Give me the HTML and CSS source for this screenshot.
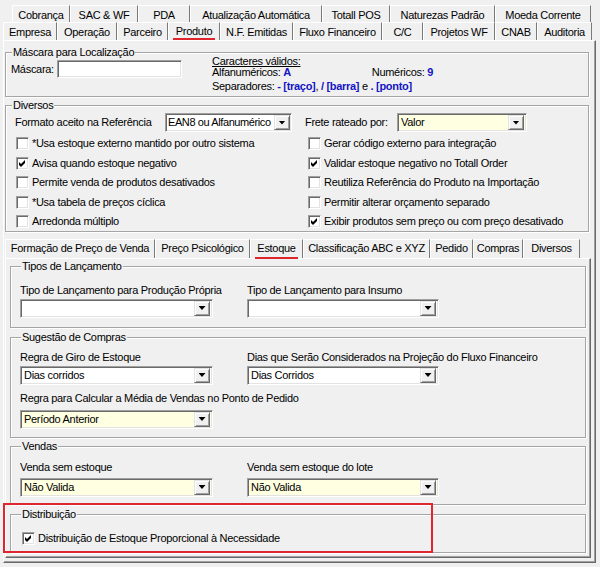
FILE: index.html
```html
<!DOCTYPE html>
<html lang="pt-BR">
<head>
<meta charset="utf-8">
<title>Parâmetros</title>
<link rel="stylesheet" href="styles.css">
</head>
<body>
<div class="window">
  <div class="tabs tabs-r1">
    <span class="tab">Cobrança</span>
    <span class="tab">SAC &amp; WF</span>
    <span class="tab">PDA</span>
    <span class="tab">Atualização Automática</span>
    <span class="tab">Totall POS</span>
    <span class="tab">Naturezas Padrão</span>
    <span class="tab">Moeda Corrente</span>
  </div>
  <div class="tabs tabs-r2">
    <span class="tab">Empresa</span>
    <span class="tab">Operação</span>
    <span class="tab">Parceiro</span>
    <span class="tab sel">Produto</span>
    <span class="tab">N.F. Emitidas</span>
    <span class="tab">Fluxo Financeiro</span>
    <span class="tab">C/C</span>
    <span class="tab">Projetos WF</span>
    <span class="tab">CNAB</span>
    <span class="tab">Auditoria</span>
  </div>

  <div class="panel">
    <fieldset class="group g-mask">
      <legend>Máscara para Localização</legend>
      <div class="mask-row">
        <span class="mask-label">Máscara:</span>
        <span class="input"></span>
        <div class="valid">
          <div class="v1"><u>Caracteres válidos:</u></div>
          <div class="v2"><span>Alfanuméricos: <b>A</b></span><span>Numéricos: <b>9</b></span></div>
          <div class="v3">Separadores: <b>- [traço]</b>, <b>/ [barra]</b> e <b>. [ponto]</b></div>
        </div>
      </div>
    </fieldset>

    <fieldset class="group g-div">
      <legend>Diversos</legend>
      <div class="cols">
        <div class="col col-l">
          <div class="frow">
            <span class="lbl lbl-fmt">Formato aceito na Referência</span>
            <span class="combo c-fmt"><span class="txt">EAN8 ou Alfanumérico</span><span class="btn"></span></span>
          </div>
          <div class="chk"><span class="box"></span><span>*Usa estoque externo mantido por outro sistema</span></div>
          <div class="chk"><span class="box on"><svg viewBox="0 0 7 7" width="7" height="7"><polygon points="0,2 2,4 6,0 6,3 2,7 0,5"/></svg></span><span>Avisa quando estoque negativo</span></div>
          <div class="chk"><span class="box"></span><span>Permite venda de produtos desativados</span></div>
          <div class="chk"><span class="box"></span><span>*Usa tabela de preços cíclica</span></div>
          <div class="chk"><span class="box"></span><span>Arredonda múltiplo</span></div>
        </div>
        <div class="col col-r">
          <div class="frow">
            <span class="lbl lbl-frete">Frete rateado por:</span>
            <span class="combo yellow c-frete"><span class="txt">Valor</span><span class="btn"></span></span>
          </div>
          <div class="chk"><span class="box"></span><span>Gerar código externo para integração</span></div>
          <div class="chk"><span class="box on"><svg viewBox="0 0 7 7" width="7" height="7"><polygon points="0,2 2,4 6,0 6,3 2,7 0,5"/></svg></span><span>Validar estoque negativo no Totall Order</span></div>
          <div class="chk"><span class="box"></span><span>Reutiliza Referência do Produto na Importação</span></div>
          <div class="chk"><span class="box"></span><span>Permitir alterar orçamento separado</span></div>
          <div class="chk"><span class="box on"><svg viewBox="0 0 7 7" width="7" height="7"><polygon points="0,2 2,4 6,0 6,3 2,7 0,5"/></svg></span><span>Exibir produtos sem preço ou com preço desativado</span></div>
        </div>
      </div>
    </fieldset>

    <div class="tabs subtabs">
      <span class="tab">Formação de Preço de Venda</span>
      <span class="tab">Preço Psicológico</span>
      <span class="tab sel">Estoque</span>
      <span class="tab">Classificação ABC e XYZ</span>
      <span class="tab">Pedido</span>
      <span class="tab">Compras</span>
      <span class="tab">Diversos</span>
    </div>

    <div class="subpanel">
      <fieldset class="group g-tipos">
        <legend>Tipos de Lançamento</legend>
        <div class="two">
          <div class="fld">
            <div class="flbl">Tipo de Lançamento para Produção Própria</div>
            <span class="combo c-l"><span class="txt"></span><span class="btn"></span></span>
          </div>
          <div class="fld">
            <div class="flbl">Tipo de Lançamento para Insumo</div>
            <span class="combo c-r"><span class="txt"></span><span class="btn"></span></span>
          </div>
        </div>
      </fieldset>

      <fieldset class="group g-sug">
        <legend>Sugestão de Compras</legend>
        <div class="two">
          <div class="fld">
            <div class="flbl">Regra de Giro de Estoque</div>
            <span class="combo c-l"><span class="txt">Dias corridos</span><span class="btn"></span></span>
          </div>
          <div class="fld">
            <div class="flbl">Dias que Serão Considerados na Projeção do Fluxo Financeiro</div>
            <span class="combo c-r"><span class="txt">Dias Corridos</span><span class="btn"></span></span>
          </div>
        </div>
        <div class="fld fld-2">
          <div class="flbl">Regra para Calcular a Média de Vendas no Ponto de Pedido</div>
          <span class="combo yellow c-l c-media"><span class="txt">Período Anterior</span><span class="btn"></span></span>
        </div>
      </fieldset>

      <fieldset class="group g-vendas">
        <legend>Vendas</legend>
        <div class="two">
          <div class="fld">
            <div class="flbl">Venda sem estoque</div>
            <span class="combo yellow c-l c-venda"><span class="txt">Não Valida</span><span class="btn"></span></span>
          </div>
          <div class="fld">
            <div class="flbl">Venda sem estoque do lote</div>
            <span class="combo yellow c-r c-venda"><span class="txt">Não Valida</span><span class="btn"></span></span>
          </div>
        </div>
      </fieldset>

      <fieldset class="group g-dist">
        <legend>Distribuição</legend>
        <div class="chk chk-dist"><span class="box on"><svg viewBox="0 0 7 7" width="7" height="7"><polygon points="0,2 2,4 6,0 6,3 2,7 0,5"/></svg></span><span>Distribuição de Estoque Proporcional à Necessidade</span></div>
      </fieldset>
    </div>
  </div>
</div>
<div class="highlight"></div>
</body>
</html>
```

FILE: styles.css
```css
* { box-sizing: border-box; }
html, body { margin: 0; padding: 0; }
body {
  width: 600px;
  height: 567px;
  overflow: hidden;
  position: relative;
  background: #f0f0f0;
  color: #000;
  font-family: "Liberation Sans", Arial, sans-serif;
  font-size: 11px;
  line-height: 13px;
  letter-spacing: -0.3px;
}
.window { padding-top: 5px; }

/* ---------- tabs ---------- */
.tabs { display: flex; }
.tabs-r1 { margin-left: 12px; height: 17px; }
.tabs-r2 { margin-left: 3px; height: 18px; }
.tab {
  position: relative;
  height: 100%;
  line-height: 18px;
  text-align: center;
  white-space: nowrap;
  border-top: 1px solid #fff;
  border-left: 1px solid #fff;
  border-right: 1px solid #7a7a7a;
}
.tab.sel::after {
  content: "";
  position: absolute;
  left: 4px;
  right: 4px;
  bottom: 0;
  height: 2px;
  background: #e0242c;
}
.tabs-r1 .tab:nth-child(1) { width: 58px; }
.tabs-r1 .tab:nth-child(2) { width: 68px; }
.tabs-r1 .tab:nth-child(3) { width: 52px; }
.tabs-r1 .tab:nth-child(4) { width: 132px; }
.tabs-r1 .tab:nth-child(5) { width: 68px; }
.tabs-r1 .tab:nth-child(6) { width: 105px; }
.tabs-r1 .tab:nth-child(7) { width: 96px; }

.tabs-r2 .tab:nth-child(1) { width: 54px; }
.tabs-r2 .tab:nth-child(2) { width: 60px; }
.tabs-r2 .tab:nth-child(3) { width: 51px; }
.tabs-r2 .tab:nth-child(4) { width: 52px; line-height: 17px; }
.tabs-r2 .tab:nth-child(5) { width: 73px; }
.tabs-r2 .tab:nth-child(6) { width: 89px; }
.tabs-r2 .tab:nth-child(7) { width: 41px; }
.tabs-r2 .tab:nth-child(8) { width: 72px; }
.tabs-r2 .tab:nth-child(9) { width: 42px; }
.tabs-r2 .tab:nth-child(10) { width: 55px; }

.subtabs { height: 19px; margin-top: 7px; }
.subtabs .tab { line-height: 17px; }
.subtabs .tab.sel::after { bottom: -1px; }
.subtabs .tab:nth-child(1) { width: 150px; }
.subtabs .tab:nth-child(2) { width: 95px; }
.subtabs .tab:nth-child(3) { width: 53px; }
.subtabs .tab:nth-child(4) { width: 127px; }
.subtabs .tab:nth-child(5) { width: 43px; }
.subtabs .tab:nth-child(6) { width: 50px; }
.subtabs .tab:nth-child(7) { width: 57px; }

/* ---------- panels ---------- */
.panel {
  margin-left: 3px;
  width: 593px;
  height: 523px;
  border-top: 1px solid #fff;
  border-left: 1px solid #fff;
  border-right: 1px solid #696969;
  border-bottom: 1px solid #696969;
  box-shadow: inset -1px -1px 0 #a0a0a0;
  padding: 5px 0 0 1px;
}
.subpanel {
  width: 586px;
  height: 300px;
  border-top: 1px solid #fff;
  border-left: 1px solid #fff;
  border-right: 1px solid #696969;
  border-bottom: 1px solid #696969;
  box-shadow: inset -1px -1px 0 #a0a0a0;
  padding: 1px 4px 0 4px;
}

/* ---------- group boxes ---------- */
fieldset.group {
  margin: 0;
  min-width: 0;
  border: 1px solid #a5a5a5;
  box-shadow: 1px 1px 0 #fff, inset 1px 1px 0 #fff;
}
fieldset.group legend {
  padding: 0 1px;
  margin-left: 1px;
  line-height: 13px;
  background: #f0f0f0;
}
.g-mask, .g-div { width: 584px; }
.g-mask { padding: 1px 5px 0 5px; }
.g-div { padding: 1px 5px 0 5px; margin-top: 2px !important; }

.mask-row { display: flex; align-items: flex-start; height: 36px; }
.mask-label { width: 46px; line-height: 18px; }
.input, .combo, .box {
  background: #fff;
  border: 1px solid;
  border-color: #a0a0a0 #fff #fff #a0a0a0;
  box-shadow: inset 1px 1px 0 #696969, inset -1px -1px 0 #e3e3e3;
}
.input { width: 125px; height: 18px; }
.valid { margin-left: 30px; margin-top: -5px; width: 221px; }
.v1 { line-height: 12px; }
.v2 { line-height: 11px; display: flex; justify-content: space-between; }
.v3 { line-height: 13px; margin-top: 2px; }
.valid b { color: #1414c4; }

.cols { display: grid; grid-template-columns: 294px 1fr; margin-bottom: -1px; }
.col-l { padding-left: 4px; }
.frow { display: flex; align-items: center; height: 19px; margin-bottom: 2px; }
.lbl-fmt { width: 150px; }
.lbl-frete { width: 92px; }
.c-fmt { width: 127px; }
.combo.c-fmt { padding: 0 1px 0 2px; }
.c-fmt .txt { letter-spacing: -0.4px; }
.c-frete { width: 130px; }

.chk { display: flex; align-items: center; height: 19.5px; white-space: nowrap; }
.col-l .chk { padding-left: 1px; }
.col-r .chk { padding-left: 3px; }
.box {
  width: 13px;
  height: 13px;
  flex: none;
  margin-right: 3px;
  display: flex;
  align-items: center;
  justify-content: center;
}
.box svg { display: block; fill: #000; }

/* ---------- combo boxes ---------- */
.combo {
  display: flex;
  align-items: center;
  height: 19px;
  padding: 0 2px 0 3px;
}
.combo.yellow { background: #ffffe1; }
.combo .txt { flex: 1; white-space: nowrap; overflow: hidden; }
.combo .btn {
  flex: none;
  width: 16px;
  height: 15px;
  background: #f0f0f0;
  border: 1px solid;
  border-color: #e3e3e3 #696969 #696969 #e3e3e3;
  box-shadow: inset 1px 1px 0 #fff, inset -1px -1px 0 #a0a0a0;
  display: flex;
  align-items: center;
  justify-content: center;
}
.combo .btn::after {
  content: "";
  width: 7px;
  height: 4px;
  background: #000;
  clip-path: polygon(0 0, 100% 0, 50% 100%);
}

/* ---------- sub groups ---------- */
.subpanel fieldset.group { padding-left: 9px; padding-right: 9px; }
.two { display: grid; grid-template-columns: 227px 1fr; }
.flbl { line-height: 13px; white-space: nowrap; }
.c-l { width: 193px; margin-top: 2px; }
.c-r { width: 192px; margin-top: 2px; }

.g-tipos { padding-top: 11px; padding-bottom: 9px; }
.g-sug { margin-top: 3px !important; padding-top: 7px; padding-bottom: 8px; }
.fld-2 { margin-top: 7px; }
.c-media { margin-top: 5px; }
.g-vendas { margin-top: 2px !important; padding-top: 8px; padding-bottom: 7px; }
.c-venda { margin-top: 4px; }
.g-dist { margin-top: 3px !important; padding-top: 10px; padding-bottom: 6px; }
.chk-dist { height: 15px; padding-left: 2px; }

/* ---------- annotation ---------- */
.highlight {
  position: absolute;
  left: 3px;
  top: 503px;
  width: 430px;
  height: 50px;
  border: 2px solid #df2530;
}
```
